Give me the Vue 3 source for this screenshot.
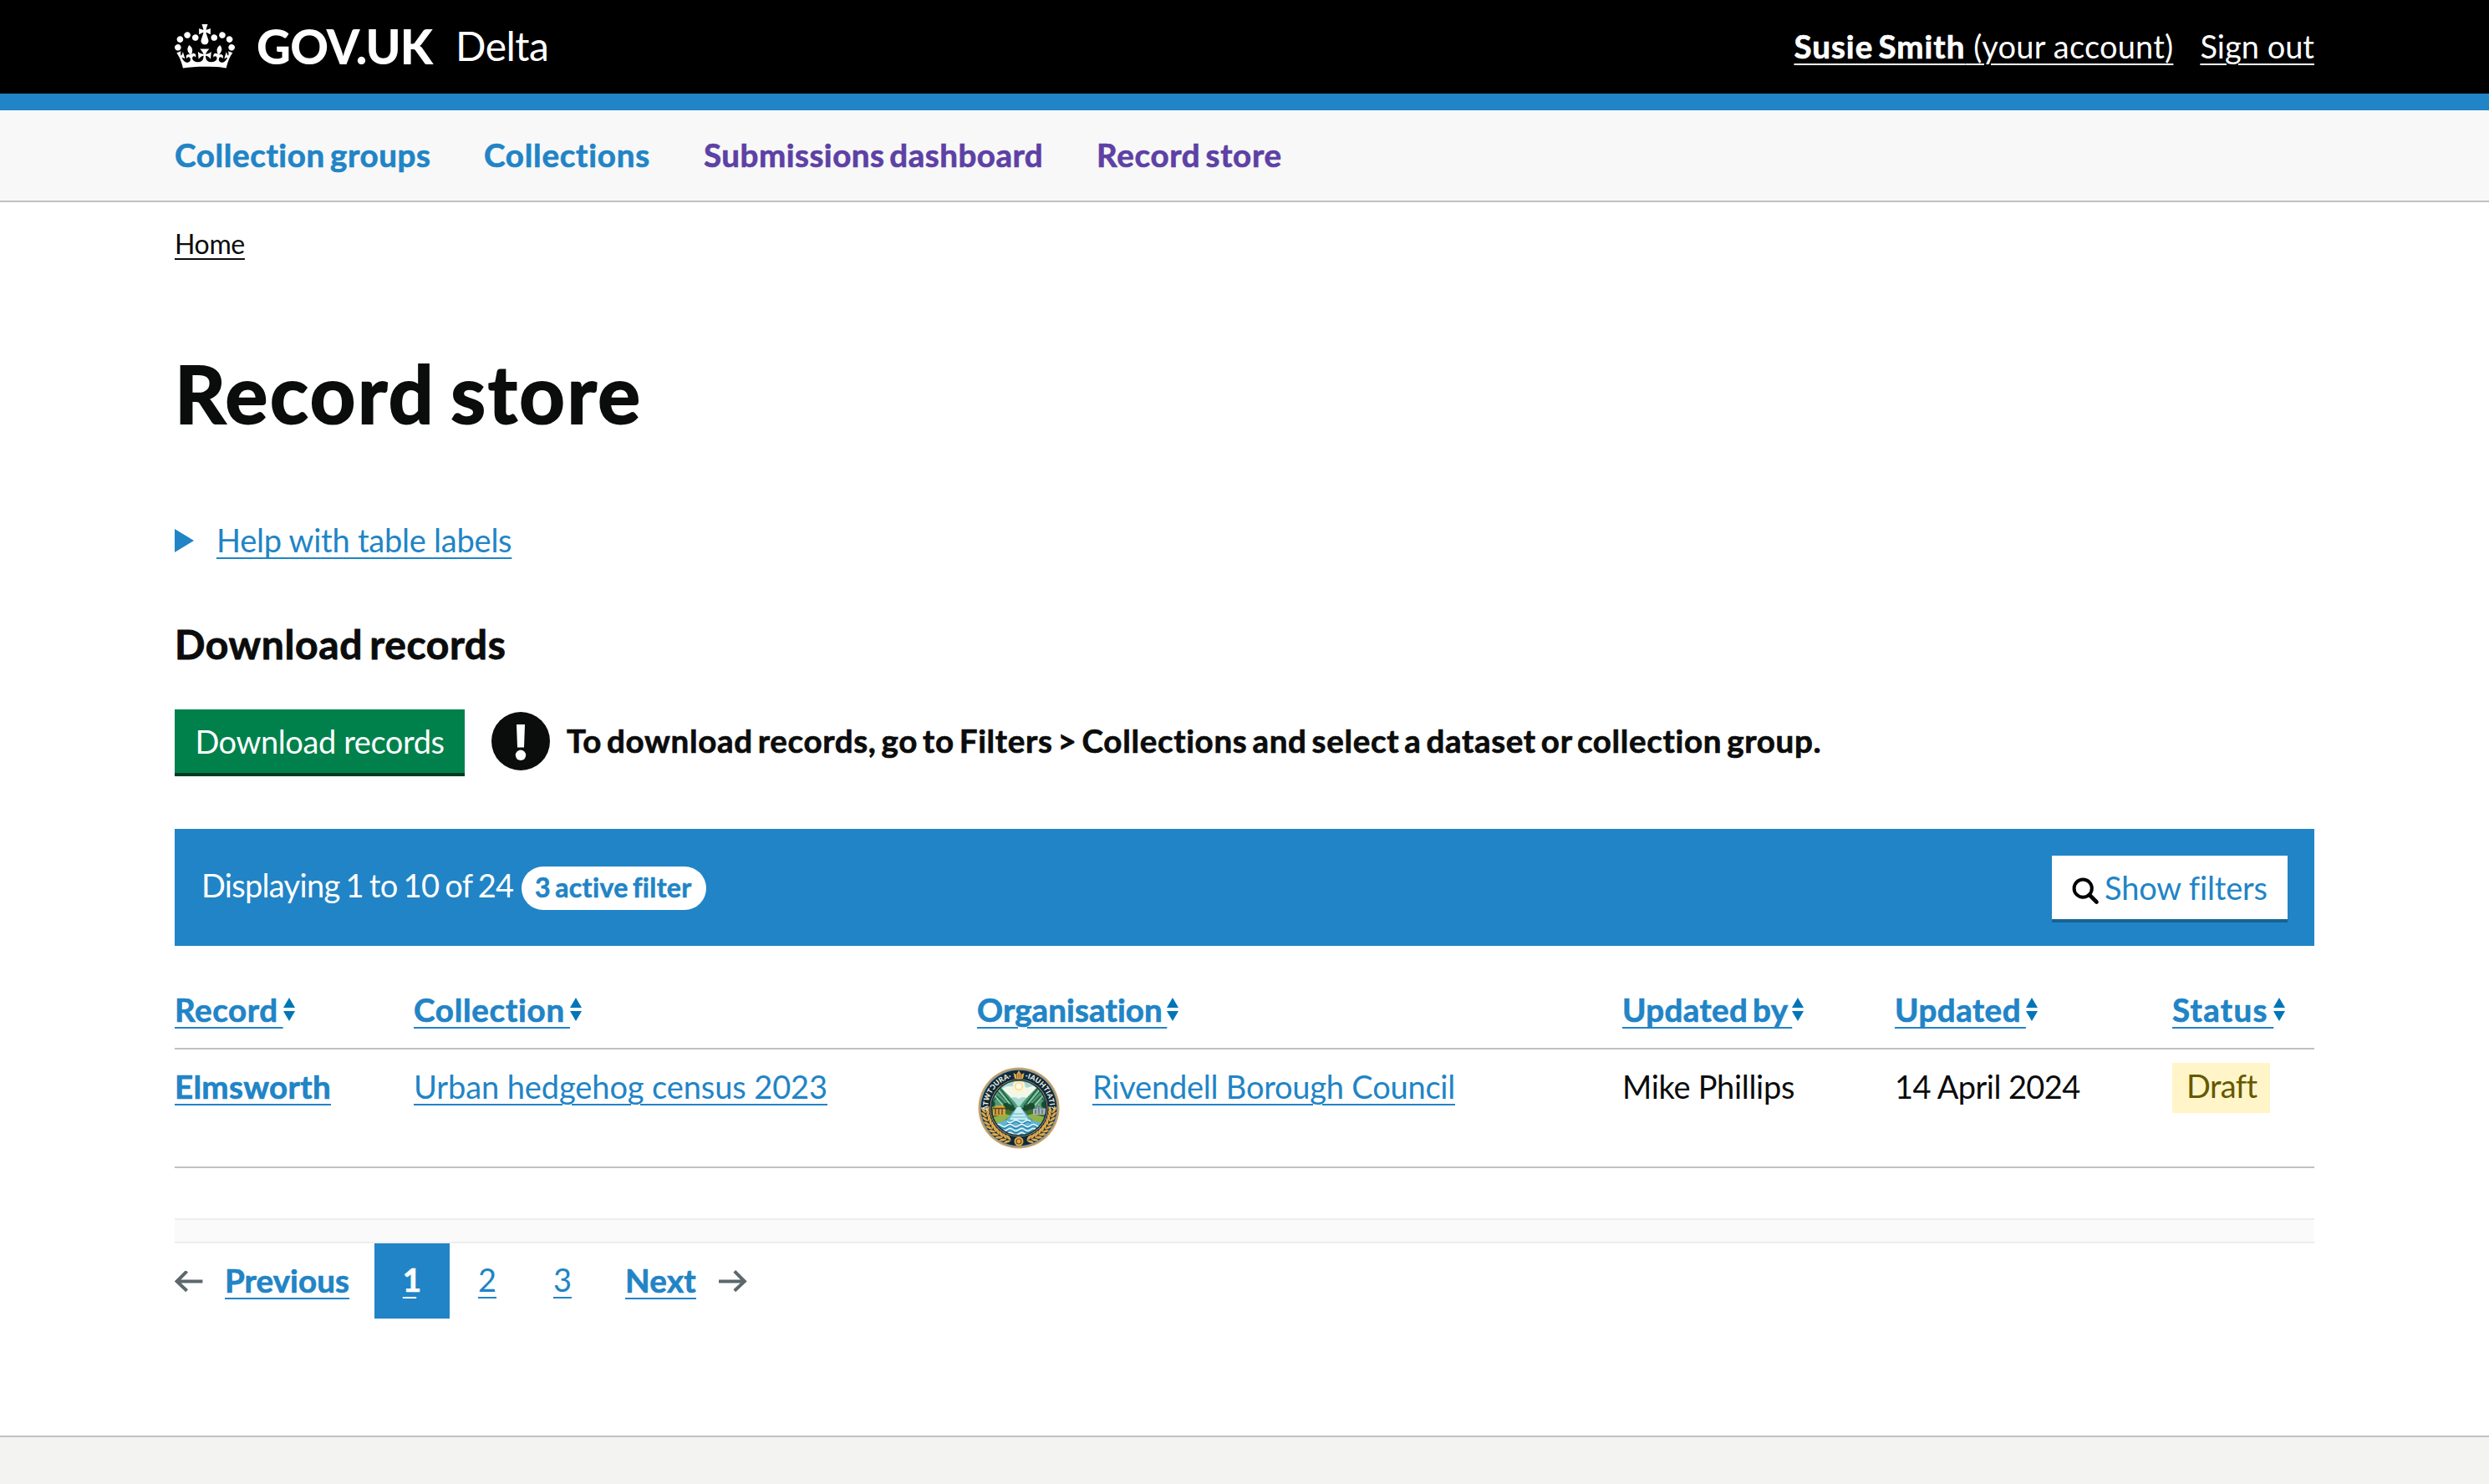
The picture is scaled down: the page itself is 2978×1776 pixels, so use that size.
<script setup>
const navItems = [
  { label: 'Collection groups', cls: 'n-groups' },
  { label: 'Collections', cls: 'n-collections' },
  { label: 'Submissions dashboard', cls: 'n-submissions visited' },
  { label: 'Record store', cls: 'n-store visited' },
]
const columns = [
  { label: 'Record', cls: 'h-record' },
  { label: 'Collection', cls: 'h-collection' },
  { label: 'Organisation', cls: 'h-organisation' },
  { label: 'Updated by', cls: 'h-by' },
  { label: 'Updated', cls: 'h-updated' },
  { label: 'Status', cls: 'h-status' },
]
// Laurel leaves run along the lower half of the crest ring, mirrored left and right.
const leaves = []
for (let i = 0; i < 10; i++) leaves.push(6 + i * 7.5)
const waves = [60, 65, 70, 75, 80]
</script>

<template>
  <div class="page">
    <header class="header">
      <div class="wrap header-row">
        <a class="brand">
          <svg class="crown" viewBox="0 0 132 97" width="72" height="53">
            <path fill="currentColor" fill-rule="evenodd" d="M25 30.2c3.5 1.5 7.7-.2 9.1-3.7 1.5-3.6-.2-7.8-3.9-9.2-3.6-1.4-7.6.3-9.1 3.9-1.4 3.5.3 7.5 3.9 9zM9 39.5c3.6 1.5 7.8-.2 9.2-3.7 1.5-3.6-.2-7.8-3.9-9.1-3.6-1.5-7.6.2-9.1 3.8-1.4 3.5.3 7.5 3.8 9zM4.4 57.2c3.5 1.5 7.7-.2 9.1-3.8 1.5-3.6-.2-7.7-3.9-9.1-3.5-1.5-7.6.3-9.1 3.8-1.4 3.5.3 7.6 3.9 9.1zm38.3-21.4c3.5 1.5 7.7-.2 9.1-3.8 1.5-3.6-.2-7.7-3.9-9.1-3.6-1.5-7.6.3-9.1 3.8-1.3 3.6.4 7.7 3.9 9.1zm64.4-5.6c-3.6 1.5-7.8-.2-9.1-3.7-1.5-3.6.2-7.8 3.8-9.2 3.6-1.4 7.7.3 9.2 3.9 1.3 3.5-.4 7.5-3.9 9zm15.9 9.3c-3.6 1.5-7.7-.2-9.1-3.7-1.5-3.6.2-7.8 3.7-9.1 3.6-1.5 7.7.2 9.2 3.8 1.5 3.5-.3 7.5-3.8 9zm4.7 17.7c-3.6 1.5-7.8-.2-9.2-3.8-1.5-3.6.2-7.7 3.9-9.1 3.6-1.5 7.7.3 9.2 3.8 1.3 3.5-.4 7.6-3.9 9.1zM89.3 35.8c-3.6 1.5-7.8-.2-9.2-3.8-1.4-3.6.2-7.7 3.9-9.1 3.6-1.5 7.7.3 9.2 3.8 1.4 3.6-.3 7.7-3.9 9.1zM69.7 17.7l8.9 4.7V9.3l-8.9 2.8c-.2-.3-.5-.6-.9-.9L72.4 0H59.6l3.5 11.2c-.3.3-.6.5-.9.9l-8.8-2.8v13.1l8.8-4.7c.3.3.6.7.9.9l-5 15.4v.1c-.2.8-.4 1.6-.4 2.4 0 4.1 3.1 7.5 7 8.1h.2c.3 0 .7.1 1 .1.4 0 .7 0 1-.1h.2c4-.6 7.1-4.1 7.1-8.1 0-.8-.1-1.7-.4-2.4V34l-5.1-15.4c.4-.2.7-.6 1-.9zM66 92.8c16.9 0 32.8 1.1 47.1 3.2 4-16.9 8.9-26.7 14-33.5l-9.6-3.4c1 4.9 1.1 7.2 0 10.2-1.5-1.4-3-4.3-4.2-8.7L108.6 76c2.8-2 5-3.2 7.5-3.3-4.4 9.4-10 11.9-13.6 11.2-4.3-.8-6.3-4.6-5.6-7.9 1-4.7 5.7-5.9 8-.5 4.3-8.7-3-11.4-7.6-8.8 7.1-7.2 7.9-13.5 2.1-21.1-8 6.1-8.1 12.3-4.5 20.8-4.7-5.4-12.1-2.5-9.5 6.2 3.4-5.2 7.9-2 7.2 3.1-.6 4.3-6.4 7.8-13.5 7.2-10.3-.9-10.9-8-11.2-13.8 2.5-.5 7.1 1.8 11 7.3L80.2 60c-4.1 4.4-8 5.3-12.3 5.4 1.4-4.4 8-11.6 8-11.6H55.5s6.4 7.2 7.9 11.6c-4.2-.1-8-1-12.3-5.4l1.4 16.4c3.9-5.5 8.5-7.7 10.9-7.3-.3 5.8-.9 12.8-11.1 13.8-7.2.6-12.9-2.9-13.5-7.2-.7-5 3.8-8.3 7.1-3.1 2.7-8.7-4.6-11.6-9.4-6.2 3.7-8.5 3.6-14.7-4.6-20.8-5.8 7.6-5 13.9 2.2 21.1-4.7-2.6-11.9.1-7.7 8.8 2.3-5.5 7.1-4.2 8.1.5.7 3.3-1.3 7.1-5.7 7.9-3.5.7-9-1.8-13.5-11.2 2.5.1 4.7 1.3 7.5 3.3l-4.7-15.4c-1.2 4.4-2.7 7.2-4.3 8.7-1.1-3-.9-5.3 0-10.2l-9.5 3.4c5 6.9 9.9 16.7 14 33.5 14.8-2.1 30.8-3.2 47.7-3.2z"/>
          </svg>
          <span class="logotype">GOV.UK</span>
          <span class="product">Delta</span>
        </a>
        <div class="account">
          <a class="link user"><b>Susie Smith</b> (your account)</a>
          <a class="link signout">Sign out</a>
        </div>
      </div>
    </header>

    <nav class="nav">
      <div class="wrap nav-row bold">
        <a v-for="n in navItems" :key="n.label" :class="n.cls">{{ n.label }}</a>
      </div>
    </nav>

    <main class="wrap main">
      <div class="crumbs"><a class="link">Home</a></div>
      <h1>Record store</h1>

      <div class="details">
        <svg width="23" height="28" viewBox="0 0 23 28"><path d="M0 0L23 14L0 28z" fill="currentColor"/></svg>
        <a class="link">Help with table labels</a>
      </div>

      <h2>Download records</h2>
      <div class="download">
        <button class="btn-green">Download records</button>
        <svg class="warn" width="70" height="70" viewBox="0 0 70 70">
          <circle cx="35" cy="35" r="35" fill="#0b0c0c"/>
          <path d="M30 15h10l-1 27.500h-8z" fill="#fff"/>
          <circle cx="35" cy="51.800" r="6.200" fill="#fff"/>
        </svg>
        <strong class="warning bold">To download records, go to Filters &gt; Collections and select a dataset or collection group.</strong>
      </div>

      <section class="filterbar">
        <span class="count">Displaying 1 to 10 of 24</span>
        <span class="pill">3 active filter</span>
        <button class="btn-white">
          <svg width="32" height="32" viewBox="0 0 32 32" fill="none" stroke="#000">
            <circle cx="13.200" cy="13.200" r="10.600" stroke-width="4"/>
            <path d="M21 21l8.500 8.500" stroke-width="4.600" stroke-linecap="round"/>
          </svg>
          <span>Show filters</span>
        </button>
      </section>

      <div class="grid head">
        <div v-for="c in columns" :key="c.label" class="th">
          <a class="link bold" :class="c.cls">{{ c.label }}&nbsp;</a>
          <svg width="14" height="28" viewBox="0 0 14 28"><path d="M7 0L14 12H0zM0 16H14L7 28z" fill="#0075b8"/></svg>
        </div>
      </div>

      <div class="grid row">
        <div><a class="link bold c-record">Elmsworth</a></div>
        <div><a class="link c-collection">Urban hedgehog census 2023</a></div>
        <div class="org">
          <svg class="crest" width="98" height="98" viewBox="0 0 98 98">
            <defs>
              <clipPath id="scene"><circle cx="49" cy="49" r="33"/></clipPath>
              <path id="arcLeft" d="M12 52A37 37 0 0 1 42 12.700"/>
              <path id="arcRight" d="M56.500 12.800A37 37 0 0 1 86 52"/>
            </defs>
            <circle cx="49" cy="49" r="48.500" fill="#d9a45f"/>
            <circle cx="49" cy="49" r="47" fill="#8d9a94"/>
            <circle cx="49" cy="49" r="45.300" fill="#0e2a3d"/>
            <circle cx="49" cy="49" r="34.500" fill="#cfa868"/>
            <g clip-path="url(#scene)">
              <rect width="98" height="98" fill="#a9d9d2"/>
              <path d="M14 28q8-6 15-2q8-6 16-1q8-5 14 0q9-5 16 2q8-2 12 2l-16 9q-6-4-11 0q-5-4-11 0q-6-4-11 0q-6-5-12 0z" fill="#f2f7e8"/>
              <circle cx="49" cy="23" r="7.500" fill="#fff3cf"/>
              <circle cx="49" cy="23" r="5" fill="#f8d98a"/>
              <circle cx="49" cy="23" r="3.500" fill="#fffbe9"/>
              <path d="M32 44l8-5l4 3l5 5l5-5l4-3l8 5v12H32z" fill="#7fbf9f"/>
              <path d="M12 30l10-8l6 3l9 9l7 8l6 10H12zM86 30l-10-8l-6 3l-9 9l-7 8l-6 10h38z" fill="#4d9b75"/>
              <path d="M14 36l8-9l17 19M16 44l7-9l12 12M27 26l16 21M84 36l-8-9l-17 19M82 44l-7-9l-12 12M71 26L55 47" fill="none" stroke="#1f5c52" stroke-width="1.600"/>
              <path d="M23 26l15 18M75 26L60 44M20 34l10 12M78 34L68 46" stroke="#a5d6a0" stroke-width="1.300"/>
              <rect x="12" y="50" width="74" height="20" fill="#426f2f"/>
              <path d="M12 62l20-6l8 2l-16 12H12zM86 62l-20-6l-8 2l16 12h12z" fill="#8fb24a"/>
              <g fill="#1c4a2c">
                <circle cx="34" cy="47" r="4"/><circle cx="40" cy="49" r="3.500"/><circle cx="44" cy="51" r="2.500"/>
                <circle cx="64" cy="47" r="4"/><circle cx="58" cy="49" r="3.500"/><circle cx="54" cy="51" r="2.500"/>
                <circle cx="80" cy="45" r="4"/><circle cx="17" cy="44" r="3.500"/>
              </g>
              <path d="M18 49l4-3h9l2 3v9H18z" fill="#d6a13f"/>
              <path d="M21 50v7M25 50v7M29 50v7M18 49.500h15" stroke="#5a4423" stroke-width="1.300"/>
              <path d="M66 57v-7h5l2-7l2 7h6v7z" fill="#a6b3bb"/>
              <path d="M69 51v5M77 51v5M73 46v10" stroke="#51626e" stroke-width="1.200"/>
              <path d="M46.500 48h5l12 15l14 5l10 4v22H11V72l10-4l13.500-5z" fill="#5fb3d3"/>
              <path d="M47 48h4l9 15H38z" fill="#c9edf1"/>
              <g fill="none" stroke="#27789f" stroke-width="1.200">
                <path v-for="y in waves" :key="y" :d="`M${y < 65 ? 35 : 14} ${y + 7}q3.500 3 7 0t7 0t7 0t7 0${y < 65 ? '' : 't7 0t7 0t7 0t7 0t7 0t7 0'}`"/>
              </g>
              <g fill="none" stroke="#f1fbfb" stroke-width="1.500">
                <path v-for="y in waves" :key="y" :d="`M${y < 65 ? 35 : 14} ${y + 5}q3.500 3 7 0t7 0t7 0t7 0${y < 65 ? '' : 't7 0t7 0t7 0t7 0t7 0t7 0'}`"/>
              </g>
              <path d="M42.500 56h12M40.500 60h17" stroke="#5fb3d3" stroke-width="1.200"/>
            </g>
            <circle cx="49" cy="49" r="33" fill="none" stroke="#16323f" stroke-width="1.600"/>
            <g fill="#e0a849">
              <g v-for="a in leaves" :key="a">
                <g :transform="`rotate(${a} 49 49)`"><path d="M89 51q5-2 5-8q-5 2-5 8zM89 51q-5-2-5-8q5 2 5 8z"/></g>
                <g :transform="`translate(98 0) scale(-1 1) rotate(${a} 49 49)`"><path d="M89 51q5-2 5-8q-5 2-5 8zM89 51q-5-2-5-8q5 2 5 8z"/></g>
              </g>
              <circle cx="49" cy="89" r="5.500"/>
              <path d="M44 14l-1.500-7l3.500 2l3-5l3 5l3.500-2L54 14z"/>
            </g>
            <circle cx="49" cy="89" r="3" fill="none" stroke="#6f4a1c" stroke-width="1.200"/>
            <path d="M46.500 9v4M49 8v5M51.500 9v4" stroke="#6f4a1c" stroke-width=".8"/>
            <g class="motto">
              <text><textPath href="#arcLeft" textLength="52">ATWTƆURA·</textPath></text>
              <text><textPath href="#arcRight" textLength="52">·IAUHTIATI?</textPath></text>
            </g>
          </svg>
          <a class="link c-org">Rivendell Borough Council</a>
        </div>
        <div class="c-by">Mike Phillips</div>
        <div class="c-date">14 April 2024</div>
        <div><span class="tag">Draft</span></div>
      </div>

      <div class="divider"></div>

      <div class="pagination">
        <svg width="30" height="26" viewBox="0 0 15 13"><path fill="#5c686c" d="m6.594-.008-6.727 6.727 6.744 6.406 1.377-1.449-4.186-3.977h12.896v-2h-12.984l4.293-4.293-1.414-1.414z"/></svg>
        <a class="link bold prev">Previous</a>
        <a class="num bold current"><span class="link">1</span></a>
        <a class="num"><span class="link">2</span></a>
        <a class="num"><span class="link">3</span></a>
        <a class="link bold next">Next</a>
        <svg width="30" height="26" viewBox="0 0 15 13"><path fill="#5c686c" d="m8.107-.008-1.414 1.414 4.293 4.293h-12.986v2h12.896l-4.186 3.977 1.377 1.449 6.744-6.406-6.725-6.727z"/></svg>
      </div>
    </main>

    <footer class="footer"></footer>
  </div>
</template>

<style>
body { background: #fff; }
</style>

<style scoped>
.page {
  display: flex;
  flex-direction: column;
  height: 1776px;
  overflow: hidden;
  font-family: Lato, "Noto Sans", sans-serif;
  font-size: 38px;
  line-height: 50px;
  color: #0b0c0c;
  white-space: nowrap;
}
svg { display: block; flex: none; overflow: visible; }
.bold, b { font-size: 38.5px; font-weight: 700; word-spacing: -4px; -webkit-text-stroke: .7px currentColor; }
button { font: inherit; border: 0; margin: 0; box-sizing: border-box; }
.wrap { width: 2560px; margin-left: 209px; }
.link {
  color: #2184c6;
  text-decoration: underline;
  text-decoration-thickness: 2px;
  text-underline-offset: 6px;
}

.header { background: #000; border-bottom: 20px solid #2184c6; color: #fff; }
.header-row { display: flex; justify-content: space-between; align-items: center; height: 109px; padding-bottom: 3px; }
.header .link { color: #fff; }
.brand { display: flex; align-items: center; }
.crown { margin-top: 2px; }
.logotype { width: 238px; margin-left: 26px; font-size: 56.500px; font-weight: 900; line-height: 60px; letter-spacing: -.8px; }
.product { font-size: 48px; letter-spacing: -.5px; }
.account { display: flex; gap: 32px; }
.user { letter-spacing: .2px; }
.user b { letter-spacing: 1px; }

.nav { background: #f8f8f8; border-bottom: 2px solid #c0c0c0; }
.nav-row { display: flex; align-items: center; height: 105px; padding-bottom: 3px; color: #2184c6; }
.visited { color: #5d41a5; }
.n-groups { width: 370px; letter-spacing: .66px; }
.n-collections { width: 263px; letter-spacing: .78px; }
.n-submissions { width: 470px; letter-spacing: .52px; }
.n-store { letter-spacing: .73px; }

.main { flex: 1; }
.crumbs { padding-top: 30px; font-size: 32px; line-height: 40px; letter-spacing: -.35px; }
.crumbs .link { color: #0b0c0c; text-underline-offset: 5px; }
h1 { margin: 108px 0 0; font-size: 95px; line-height: 100px; letter-spacing: 2.7px; word-spacing: -8px; -webkit-text-stroke: 2px currentColor; }
.details { display: flex; align-items: center; gap: 27px; margin-top: 101px; color: #2184c6; letter-spacing: -.23px; }
.details svg { margin-top: 1px; }
.details .link { text-decoration-skip-ink: none; }
h2 { margin: 70px 0 0; font-size: 48px; line-height: 60px; letter-spacing: .62px; word-spacing: -4px; -webkit-text-stroke: .9px currentColor; }
.download { display: flex; align-items: center; height: 76px; margin-top: 48px; }
.btn-green { width: 347px; height: 76px; padding: 0; background: #00814c; box-shadow: 0 4px 0 #003a22; color: #fff; letter-spacing: -.4px; }
.warn { margin-left: 32px; }
.warning { margin: -3px 0 0 20px; letter-spacing: .68px; }

.filterbar { display: flex; align-items: center; box-sizing: border-box; height: 140px; margin-top: 67px; padding: 0 32px; background: #2184c6; color: #fff; }
.count { width: 383px; margin-top: -6px; letter-spacing: -.7px; word-spacing: -2px; }
.pill { box-sizing: border-box; width: 221px; height: 52px; margin-top: 2px; padding-left: 16px; border-radius: 26px; background: #fff; color: #2184c6; font-size: 32px; font-weight: 700; line-height: 49px; letter-spacing: .4px; word-spacing: -3px; -webkit-text-stroke: .6px currentColor; }
.btn-white { display: flex; align-items: center; width: 282px; height: 76px; margin-left: auto; padding: 0 0 0 24px; background: #fff; box-shadow: 0 4px 0 #176395; color: #2184c6; }
.btn-white svg { margin: 8px 7px 0 0; }
.btn-white span { letter-spacing: -.15px; }

.grid { display: grid; grid-template-columns: 286px 674px 772px 326px 332px 170px; border-bottom: 2px solid #c0c0c0; }
.head { padding: 51px 0 21px; }
.th { display: flex; align-items: center; }
.h-record { letter-spacing: .6px; }
.h-collection { letter-spacing: .75px; }
.h-organisation { letter-spacing: .12px; }
.h-by { letter-spacing: .4px; }
.h-updated { letter-spacing: .5px; }
.h-status { letter-spacing: 1.3px; }
.row { height: 121px; padding-top: 19px; }
.c-record { letter-spacing: .35px; }
.c-collection { letter-spacing: -.1px; }
.org { display: flex; align-items: flex-start; }
.crest { margin: 2px 39px 0 1px; }
.motto { fill: #f4efdc; font-size: 8.500px; font-weight: 900; }
.c-org { letter-spacing: -.22px; }
.c-by { letter-spacing: -.3px; }
.c-date { letter-spacing: -.58px; }
.tag { display: block; box-sizing: border-box; width: 117px; height: 60px; margin-top: -3px; padding-left: 17px; background: #fff5c9; color: #665800; line-height: 55px; letter-spacing: -.6px; }

.divider { height: 26px; margin-top: 60px; border: solid #eee; border-width: 2px 0; background: #fafafa; }
.pagination { display: flex; align-items: center; height: 90px; }
.prev { width: 149px; margin: -3px 30px 0; letter-spacing: .1px; }
.num { box-sizing: border-box; width: 90px; height: 90px; line-height: 87px; text-align: center; }
.current { padding-right: 6px; background: #2184c6; }
.current .link { color: #fff; letter-spacing: -6px; }
.next { width: 85px; margin: -3px 31px 0 30px; letter-spacing: .3px; }

.footer { height: 56px; border-top: 2px solid #bfc1c3; background: #f3f3f2; }
</style>
